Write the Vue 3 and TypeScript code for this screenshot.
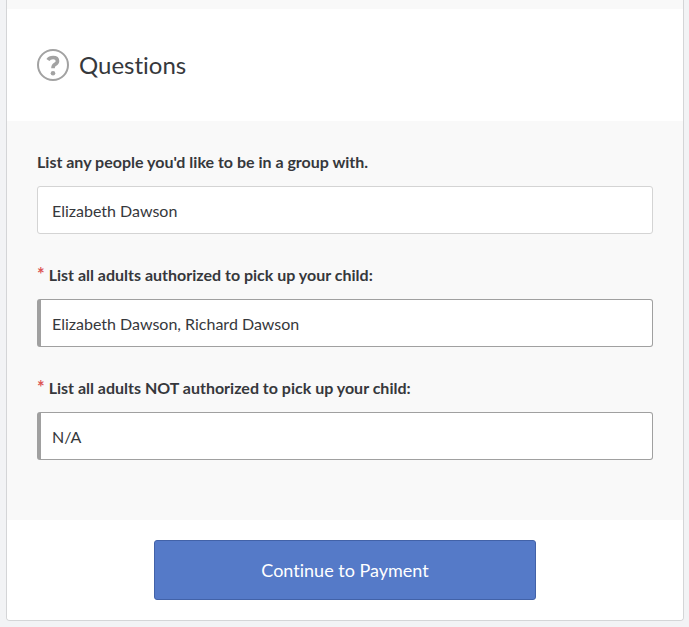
<script setup lang="ts">
import { reactive } from 'vue'

interface Question {
  id: string
  label: string
  required: boolean
  answer: string
}

const questions = reactive<Question[]>([
  { id: 'group', label: "List any people you'd like to be in a group with.", required: false, answer: 'Elizabeth Dawson' },
  { id: 'pickup', label: 'List all adults authorized to pick up your child:', required: true, answer: 'Elizabeth Dawson, Richard Dawson' },
  { id: 'no-pickup', label: 'List all adults NOT authorized to pick up your child:', required: true, answer: 'N/A' },
])
</script>

<template>
  <form class="card" @submit.prevent>
    <header class="heading">
      <svg class="icon" viewBox="0 0 32 32" aria-hidden="true">
        <circle cx="16" cy="16" r="15" fill="none" stroke="currentColor" stroke-width="2" />
        <path d="M10.9 10.9C12.2 9 13.9 8.5 16.1 8.5C18.9 8.5 20.5 9.9 20.5 11.9C20.5 13.7 19.5 14.5 18 15.4C16.4 16.3 16 16.9 16 19.2" fill="none" stroke="currentColor" stroke-width="3.6" />
        <circle cx="16" cy="24.2" r="2.3" fill="currentColor" />
      </svg>
      <h2 class="title">Questions</h2>
    </header>

    <section class="questions">
      <div v-for="q in questions" :key="q.id" class="field">
        <label class="label" :for="q.id"><span v-if="q.required" class="star">*</span>{{ q.label }}</label>
        <input :id="q.id" v-model="q.answer" class="input" :class="{ required: q.required }" type="text" :required="q.required" />
      </div>
    </section>

    <footer class="footer">
      <button class="submit" type="submit">Continue to Payment</button>
    </footer>
  </form>
</template>

<style>
body {
  background: #f2f3f5;
}
</style>

<style scoped>
.card {
  box-sizing: border-box;
  margin: 0 5px 6px 6px;
  padding-top: 9px;
  border: 1px solid #d4d5d7;
  border-top: 0;
  border-radius: 0 0 4px 4px;
  background: #f9f9f9;
  color: #36383c;
  font-family: Lato, sans-serif;
  font-variant-ligatures: none;
  overflow: hidden;
}

.heading {
  display: flex;
  align-items: center;
  gap: 10px;
  padding: 40px 30px;
  background: #fff;
}

.icon {
  width: 32px;
  height: 32px;
  color: #a2a2a2;
}

.title {
  margin: 0;
  font-size: 24px;
  font-weight: 400;
  line-height: 32px;
}

.questions {
  display: flex;
  flex-direction: column;
  gap: 29px;
  padding: 29px 30px 60px;
}

.field {
  display: flex;
  flex-direction: column;
  gap: 12px;
}

.label {
  font-size: 16px;
  font-weight: 700;
  line-height: 24px;
}

.star {
  margin-right: 4px;
  color: #dc5555;
  font-size: 18px;
  line-height: 1;
}

.input {
  box-sizing: border-box;
  width: 100%;
  height: 48px;
  padding: 0 14px;
  border: 1px solid #d4d4d4;
  border-radius: 3px;
  outline: 0;
  background: #fff;
  color: inherit;
  font: 400 16px/24px Lato, sans-serif;
}

.input.required {
  padding-left: 11px;
  border-color: #a0a0a0;
  border-left-width: 4px;
}

.footer {
  display: flex;
  justify-content: center;
  padding: 20px 30px;
  background: #fff;
}

.submit {
  width: 382px;
  max-width: 100%;
  height: 60px;
  border: 1px solid #4262a8;
  border-radius: 3px;
  background: #557ac8;
  color: #fff;
  font: 400 18px/24px Lato, sans-serif;
  font-variant-ligatures: none;
  cursor: pointer;
}
</style>
